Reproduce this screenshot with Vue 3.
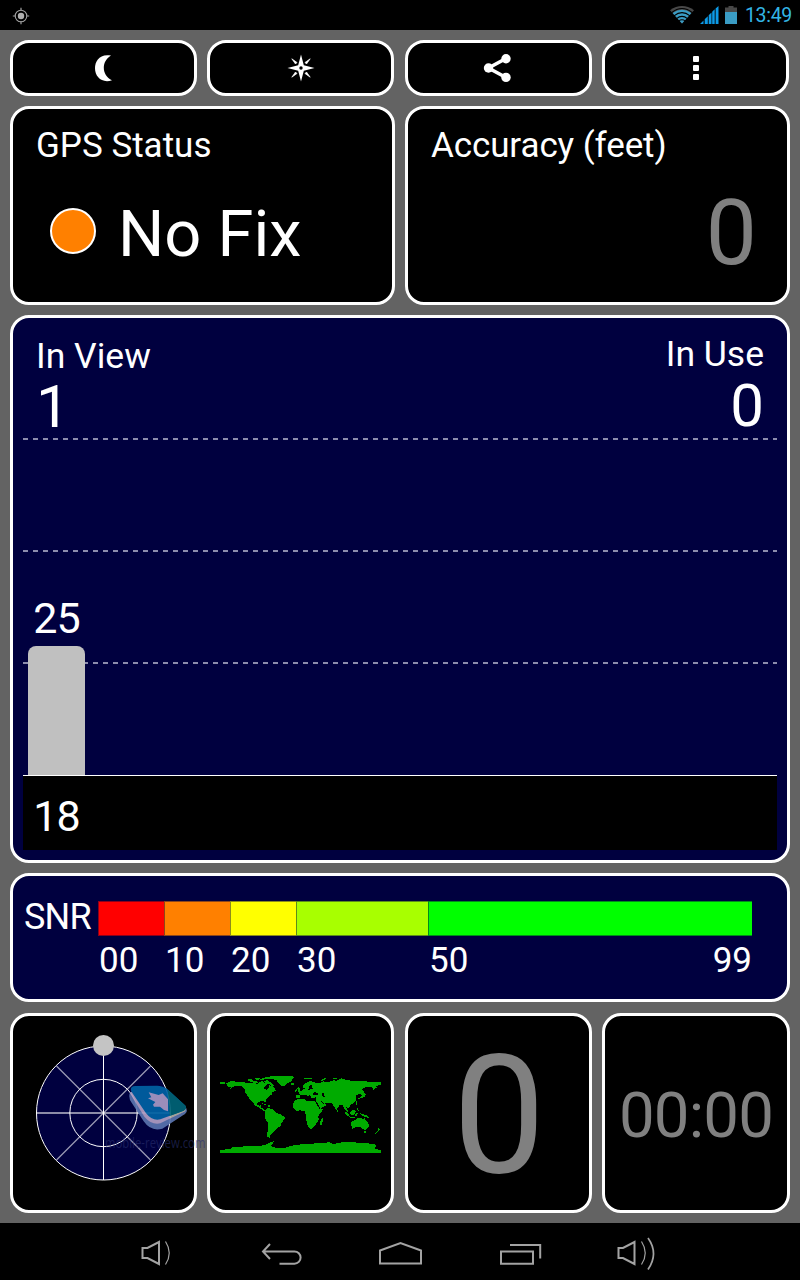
<template>
  <div class="screen">
    <header class="status-bar">
      <svg class="gps-icon" width="18" height="18" viewBox="0 0 18 18" fill="none" stroke="#a0a0a0">
        <circle cx="9" cy="9" r="5.8" stroke-width="1.1" />
        <circle cx="9" cy="9" r="3.2" fill="#b0b0b0" stroke="none" />
        <path d="M9 .8v3M9 14.200v3M.8 9h3M14.200 9h3" stroke-width="1.2" />
      </svg>
      <div class="status-right">
        <svg width="24" height="18" viewBox="0 0 24 18">
          <path d="M12 17.500L0 4.200Q12-4.200 24 4.200Z" fill="#484848" />
          <path d="M12 17.500L2.600 7Q12 .4 21.400 7Z" fill="#3a9cc4" />
          <g fill="none" stroke="#000" stroke-width="1.100">
            <path d="M1.500 6.700Q12-1.800 22.500 6.700M4 9.900Q12 3.400 20 9.900M6.500 12.600Q12 8.200 17.500 12.600M8.700 14.900Q12 12.600 15.300 14.900" />
          </g>
        </svg>
        <svg width="19" height="18" viewBox="0 0 19 18" fill="#0d9ae6">
          <path d="M0 18L3.500 14.500V18ZM4.700 13.300L7.800 10.200V18H4.700ZM8.700 9.300L11.500 6.500V18H8.700ZM12.200 5.800L14.700 3.300V18H12.200ZM15.600 2.400L18.500 0V18H15.600Z" />
        </svg>
        <svg width="12" height="18" viewBox="0 0 12 18">
          <path d="M3.500 0h5v1.500H12V6H0V1.500h3.500z" fill="#484848" />
          <path d="M0 6h12v12H0z" fill="#3a9cc4" />
        </svg>
        <span class="clock">13:49</span>
      </div>
    </header>

    <main class="content">
      <div class="row toolbar">
        <button class="tile tool">
          <svg width="28" height="28" viewBox="0 0 28 28"><path d="M21 1.500C9.500-.6 5 7 5 14.300C5 23 12 29.500 22 26.300C11.500 21.500 11 7.500 21 1.500Z" fill="#fff" /></svg>
        </button>
        <button class="tile tool">
          <svg width="28" height="28" viewBox="0 0 28 28">
            <path d="M14 .5L16.800 11.200L27.500 14L16.800 16.800L14 27.500L11.200 16.800L.5 14L11.200 11.200Z" fill="#fff" />
            <path d="M4.800 4.800L10 8.500L8.500 10ZM23.200 4.800L18 8.500L19.500 10ZM4.800 23.200L10 19.500L8.500 18ZM23.200 23.200L18 19.500L19.500 18Z" fill="#fff" stroke="#fff" stroke-width=".7" />
            <circle cx="14" cy="14" r="1.700" />
          </svg>
        </button>
        <button class="tile tool">
          <svg width="28" height="28" viewBox="1.500 0 28 28" class="share">
            <path d="M22.500 4.500L5 14L22.500 23.500" fill="none" stroke="#fff" stroke-width="3.600" />
            <g fill="#fff"><circle cx="5" cy="14" r="4.700" /><circle cx="22.500" cy="4.700" r="4.700" /><circle cx="22.500" cy="23.400" r="4.700" /></g>
          </svg>
        </button>
        <button class="tile tool">
          <svg width="28" height="28" viewBox="0 0 28 28" fill="#fff">
            <rect x="11" y="2" width="6" height="6" rx="1" />
            <rect x="11" y="11" width="6" height="6" rx="1" />
            <rect x="11" y="20" width="6" height="6" rx="1" />
          </svg>
        </button>
      </div>

      <div class="row summary">
        <section class="tile status-card">
          <h2>GPS Status</h2>
          <div class="fix"><span class="fix-dot"></span><span>No Fix</span></div>
        </section>
        <section class="tile accuracy-card">
          <h2>Accuracy (feet)</h2>
          <div class="accuracy-value">0</div>
        </section>
      </div>

      <section class="tile navy chart">
        <div class="chart-head">
          <div class="count">
            <h2>In View</h2>
            <div class="count-value">1</div>
          </div>
          <div class="count in-use">
            <h2>In Use</h2>
            <div class="count-value">0</div>
          </div>
        </div>
        <div class="plot">
          <div v-for="sat in satellites" :key="sat.prn" class="sat">
            <span class="sat-snr">{{ sat.snr }}</span>
            <div class="sat-bar" :style="{ height: barHeight(sat.snr) }"></div>
          </div>
        </div>
        <div class="axis">
          <span v-for="sat in satellites" :key="sat.prn">{{ sat.prn }}</span>
        </div>
      </section>

      <section class="tile navy snr">
        <span class="snr-title">SNR</span>
        <div class="snr-scale">
          <div class="snr-colors">
            <span class="red"></span><span class="orange"></span><span class="yellow"></span><span class="lime"></span><span class="green"></span>
          </div>
          <div class="snr-labels">
            <span>00</span><span>10</span><span>20</span><span>30</span>
            <span class="last"><span>50</span><span>99</span></span>
          </div>
        </div>
      </section>

      <div class="row bottom">
        <div class="tile sky">
          <svg width="137" height="148" viewBox="35 1034 137 148">
            <circle cx="103.500" cy="1113" r="67" fill="#00003f" stroke="#fff" />
            <circle cx="103.500" cy="1113" r="33.700" fill="none" stroke="#fff" />
            <path d="M56.500 1066L150.500 1160M150.500 1066L56.500 1160" stroke="#fff" stroke-opacity=".6" stroke-width="1.300" />
            <path d="M36.500 1113H170.500" stroke="#fff" stroke-opacity=".55" stroke-width="2" />
            <path d="M103.500 1046V1180" stroke="#fff" />
            <circle cx="103.500" cy="1045.500" r="10.500" fill="#c4c4c4" />
          </svg>
          <div class="watermark">
            <svg width="60" height="50" viewBox="0 0 180 150">
              <path d="M8 28Q4 44 14 56L50 112Q72 144 106 134L168 94Q184 84 178 74L20 20Z" fill="#5a74ae" />
              <path d="M9 28L52 98Q74 124 100 118L174 82L178 72L20 18Z" fill="#b09fc4" />
              <path d="M128 103L174 82L178 72L130 60Z" fill="#b3b3a5" />
              <path d="M24 6Q6 8 14 24L56 86Q76 112 100 106L170 80Q182 74 174 64L122 16Q106 4 88 5Z" fill="#0062a3" />
              <path d="M122 17L174 64Q182 74 170 80L128 96Z" fill="#006479" />
              <path d="M65 25L95 33L107 28L123 46V82L111 78L99 68H81L78 62L85 54L63 43L73 40Z" fill="#a89ac5" />
            </svg>
            <span>mobile-review.com</span>
          </div>
        </div>
        <div class="tile world">
          <svg width="161" height="77" viewBox="45 48 483 231" fill="#00ab00" shape-rendering="crispEdges">
            <path d="M45 65h14v6H45zM64 70L72 65L84 63L96 67L110 66L124 68L134 70L146 67L156 72L166 66L172 62L178 68L188 60L196 68L190 72L180 78L176 84L184 90L190 86L192 76L202 79L208 84L214 92L204 96L200 100L206 103L196 104L190 112L182 119L181 132L177 124L166 124L158 126L157 134L164 138L170 134L168 142L176 146L182 154L174 151L160 142L150 136L142 126L136 120L128 108L121 98L120 90L112 80L98 77L86 80L74 88L78 81L68 80Z" />
            <path d="M124 60l12-3 10 4-10 4zM138 64l14-2 8 6-14 0zM148 56l12-3 8 4-10 3zM164 59l10-5 18-4 10-1-12 7-14 3zM174 64l12-3 14 7 8 11-7-1-12-10z" />
            <path d="M180 55L198 49L230 47L262 49L269 51L262 58L258 65L246 70L236 79L228 76L220 68L214 60L200 57ZM258 69h9v5h-9z" />
            <path d="M170 130l12 2 6 4-8 0zM188 136h8v4h-8z" />
            <path d="M180 150L188 144L204 148L214 158L224 162L239 170L239 176L230 188L226 198L214 206L208 214L200 220L196 226L195 233L187 232L186 222L190 206L190 190L182 178L179 166Z" />
            <path d="M276 118L296 115L302 122L316 124L330 124L338 138L344 147L356 147L346 160L340 168L341 180L334 190L328 200L318 207L312 204L306 190L303 176L303 164L298 153L286 151L274 153L264 142L264 132L270 122ZM348 180l5-7 1 7-4 14-5 0-1-8z" />
            <path d="M274 114V104H284L280 98L290 94L296 88L302 86L294 82V76L304 68L314 64L326 65L336 70L346 68L354 64L370 66L384 61L396 62L410 55L426 60L450 64L480 64L500 66L528 67V74L512 78L516 82L504 90L506 84L496 80L480 82L472 88L478 96L472 106L464 102L452 106L454 118L450 126L436 136L431 144L424 142L430 158L418 146L412 134L404 134L394 150L386 138L382 131L370 128L358 128L364 136L346 146L338 134L332 122L334 112L320 114L314 106L308 109L303 103L298 105L286 106L283 114Z" />
            <path d="M276 84l6-4 4 10 2 6-10 2 3-5zM270 90l5-2v6l-5 2zM298 53h24v3h-24zM346 61l14-7 5 1-12 8zM382 56l14-3-2 5z" />
            <path d="M472 92l6 5 4 6-4 8-12 4-8 2 8-6 5-6zM452 124h4v10h-4zM396 150h4v5h-4z" />
            <path d="M418 152l10 8 8 10-6-1-10-9zM432 170l16 2 6 3-18-1zM436 156l8-8 8 6-6 12-9-2zM452 158l7 2-4 9-4-1zM454 140l6 8 2 7-5-5zM465 160l10 2 14 6 4 7-9-3-14-6z" />
            <path d="M440 184L452 180L460 173L468 173L474 180L478 174L484 182L492 194L490 204L480 210L472 206L464 200L452 202L442 206L438 194ZM478 214h6v4h-6zM520 205l5 4-6 6-8 7-1-3 8-7z" />
            <path d="M45 278V269L75 268L84 260L110 260L130 257L155 258L178 256L190 250L206 243L204 250L198 258L216 265L240 263L262 257L290 253L320 251L348 249L374 247L384 253L400 248L430 246L462 248L488 250L514 254L510 267L528 270V278Z" />
            <g fill="#000">
              <path d="M288 108l10 1 10 8 12 0 12-2-1 6-20 1-8-5-12-2-8 3z" />
              <path d="M324 99l8-3 10 6-6 4-12-1zM350 98l6 2 3 10-5 2-4-8zM314 78l8-6 1 3-4 7 8 2-12 5-6 0zM330 123l4 1 10 17-3 2zM346 123l4 1 8 6-3 1z" />
            </g>
          </svg>
        </div>
        <div class="tile speed">0</div>
        <div class="tile timer">00:00</div>
      </div>
    </main>

    <nav class="nav-bar">
      <svg viewBox="100 1223 120 57">
        <path d="M142.500 1248h5l11.500-6v22l-11.500-6h-5z" />
        <path d="M165.500 1241.500q7.500 11.500 0 23" stroke-width="1.200" />
      </svg>
      <svg viewBox="220 1223 120 57">
        <path d="M270 1244l-7 7.500 7 7.500M263.500 1251.500h31a6 6 0 0 1 0 12.200H279.500" />
      </svg>
      <svg viewBox="340 1223 120 57">
        <path d="M380 1263.500V1250.500l20.500-7.500 20.500 7.500v13z" />
      </svg>
      <svg viewBox="460 1223 120 57">
        <path d="M501 1251.500h32v12.300h-32zM510 1245h30.200v13.500" />
      </svg>
      <svg viewBox="580 1223 120 57">
        <path d="M618.500 1248h4.500l11.500-6v22l-11.500-6h-4.500z" />
        <path d="M641.500 1241.500q7.500 11.500 0 23" stroke-width="1.200" />
        <path d="M648 1238q11 15.500 0 31.500" stroke-width="1.700" />
      </svg>
    </nav>
  </div>
</template>

<script setup>
import { ref } from 'vue';

const satellites = ref([{ prn: 18, snr: 25 }]);

const barHeight = (snr) => `${Math.round(snr * 5.16)}px`;
</script>

<style>
body { background: #636363; }
</style>

<style scoped>
* { box-sizing: border-box; }
.screen { width: 800px; height: 1280px; display: flex; flex-direction: column; background: #636363; color: #fff; font-family: Roboto, "Liberation Sans", sans-serif; overflow: hidden; }
.status-bar { height: 30px; flex-shrink: 0; background: #000; display: flex; align-items: center; justify-content: space-between; padding: 0 8px 0 12px; }
.gps-icon { margin-top: 1px; }
.status-right { display: flex; align-items: center; gap: 6px; }
.clock { color: #33b5e5; font-size: 19.5px; letter-spacing: -0.3px; line-height: 30px; margin: 1px 0 0 2px; }
.content { flex: 1; display: flex; flex-direction: column; gap: 10px; padding: 10px; }
.tile { background: #000; border: 3px solid #fff; border-radius: 19px; color: #fff; }
.navy { background: #00003f; }
.row { display: grid; column-gap: 10px; }
.toolbar { height: 56px; grid-template-columns: 187px 188px 187px 188px; }
.tool { width: 187px; display: flex; align-items: center; justify-content: center; padding: 0; }
.share { overflow: visible; }
.summary { height: 199px; grid-template-columns: 1fr 1fr; }
h2 { margin: 0; font-size: 35px; line-height: 42px; font-weight: 400; white-space: nowrap; }
.status-card { padding: 16px 23px; }
.fix { display: flex; align-items: center; margin: 28px 0 0 14px; font-size: 65px; line-height: 78px; }
.fix-dot { width: 46px; height: 46px; border: 2px solid #fff; border-radius: 50%; background: #ff8000; margin: 0 22px 6px 0; }
.accuracy-card { padding: 16px 30px 0 23px; }
.accuracy-card h2 { letter-spacing: -0.1px; }
.accuracy-value { margin-top: 13px; font-size: 91px; line-height: 106px; text-align: right; color: #808080; }
.chart { height: 548px; padding: 17px 10px 10px; display: flex; flex-direction: column; }
.chart-head { height: 103px; flex-shrink: 0; display: flex; justify-content: space-between; padding: 0 13px; }
.chart h2 { font-size: 35.5px; padding-top: 1px; line-height: 41px; }
.count-value { font-size: 60px; line-height: 60px; }
.in-use { text-align: right; margin-top: -2px; }
.in-use .count-value { margin-top: 1px; }
.plot {
  --dash: repeating-linear-gradient(90deg, #8c8cad 0 5px, transparent 5px 10px);
  height: 337px; flex-shrink: 0; display: flex; align-items: flex-end; padding-left: 5px;
  background: var(--dash) 0 0 / 100% 2px no-repeat, var(--dash) 0 112px / 100% 2px no-repeat, var(--dash) 0 224px / 100% 2px no-repeat;
}
.sat { width: 57px; }
.sat-snr { display: block; font-size: 43px; line-height: 50px; letter-spacing: -1px; text-align: center; margin-bottom: 3px; }
.sat-bar { background: #c0c0c0; border-radius: 8px 8px 0 0; }
.axis { height: 75px; background: #000; border-top: 1px solid #fff; padding: 7px 0 0 5px; font-size: 43px; line-height: 67px; letter-spacing: -1px; }
.axis span { display: block; width: 57px; text-align: center; }
.snr { height: 129px; display: flex; padding: 25px 35px 0 9px; font-size: 36px; }
.snr-title { width: 76px; line-height: 32px; padding-left: 2px; letter-spacing: -0.8px; white-space: nowrap; }
.snr-scale { flex: 1; }
.snr-colors, .snr-labels { display: grid; grid-template-columns: 66px 66px 66px 132px 1fr; }
.snr-colors span { height: 35px; border: solid rgba(0, 0, 60, 0.45); border-width: 1px 0 1px 1px; }
.red { background: #f00; }
.orange { background: #ff8000; }
.yellow { background: #ff0; }
.lime { background: #a8ff00; }
.green { background: #0f0; }
.snr-labels { font-size: 35px; line-height: 50px; }
.snr-labels > span { padding-left: 1px; }
.last { display: flex; justify-content: space-between; }
.bottom { height: 200px; margin-top: 1px; grid-template-columns: 187px 187px 187px 188px; column-gap: 10px; justify-content: space-between; }
.bottom .tile { display: flex; align-items: center; justify-content: center; }
.sky { position: relative; }
.bottom .sky { align-items: flex-start; padding-top: 18px; }
/* site mark laid over the sky plot */
.watermark { position: absolute; left: 92px; top: 68px; display: flex; flex-direction: column; }
.watermark svg { margin-left: 22px; opacity: 0.92; }
.watermark span { width: 124px; font: 14px/18px "Open Sans", sans-serif; color: rgba(42, 48, 112, 0.6); white-space: nowrap; transform: scaleX(0.81); transform-origin: left; }
.world { padding-top: 2px; }
.speed { font-size: 165px; line-height: 180px; color: #808080; padding: 6px 0 0 2px; }
.timer { font-size: 63.5px; letter-spacing: -0.8px; color: #808080; padding-top: 4px; }
.nav-bar { height: 57px; flex-shrink: 0; background: #000; display: flex; padding: 0 100px; }
.nav-bar svg { width: 120px; height: 57px; fill: none; stroke: #a3a3a3; stroke-width: 2; }
</style>
